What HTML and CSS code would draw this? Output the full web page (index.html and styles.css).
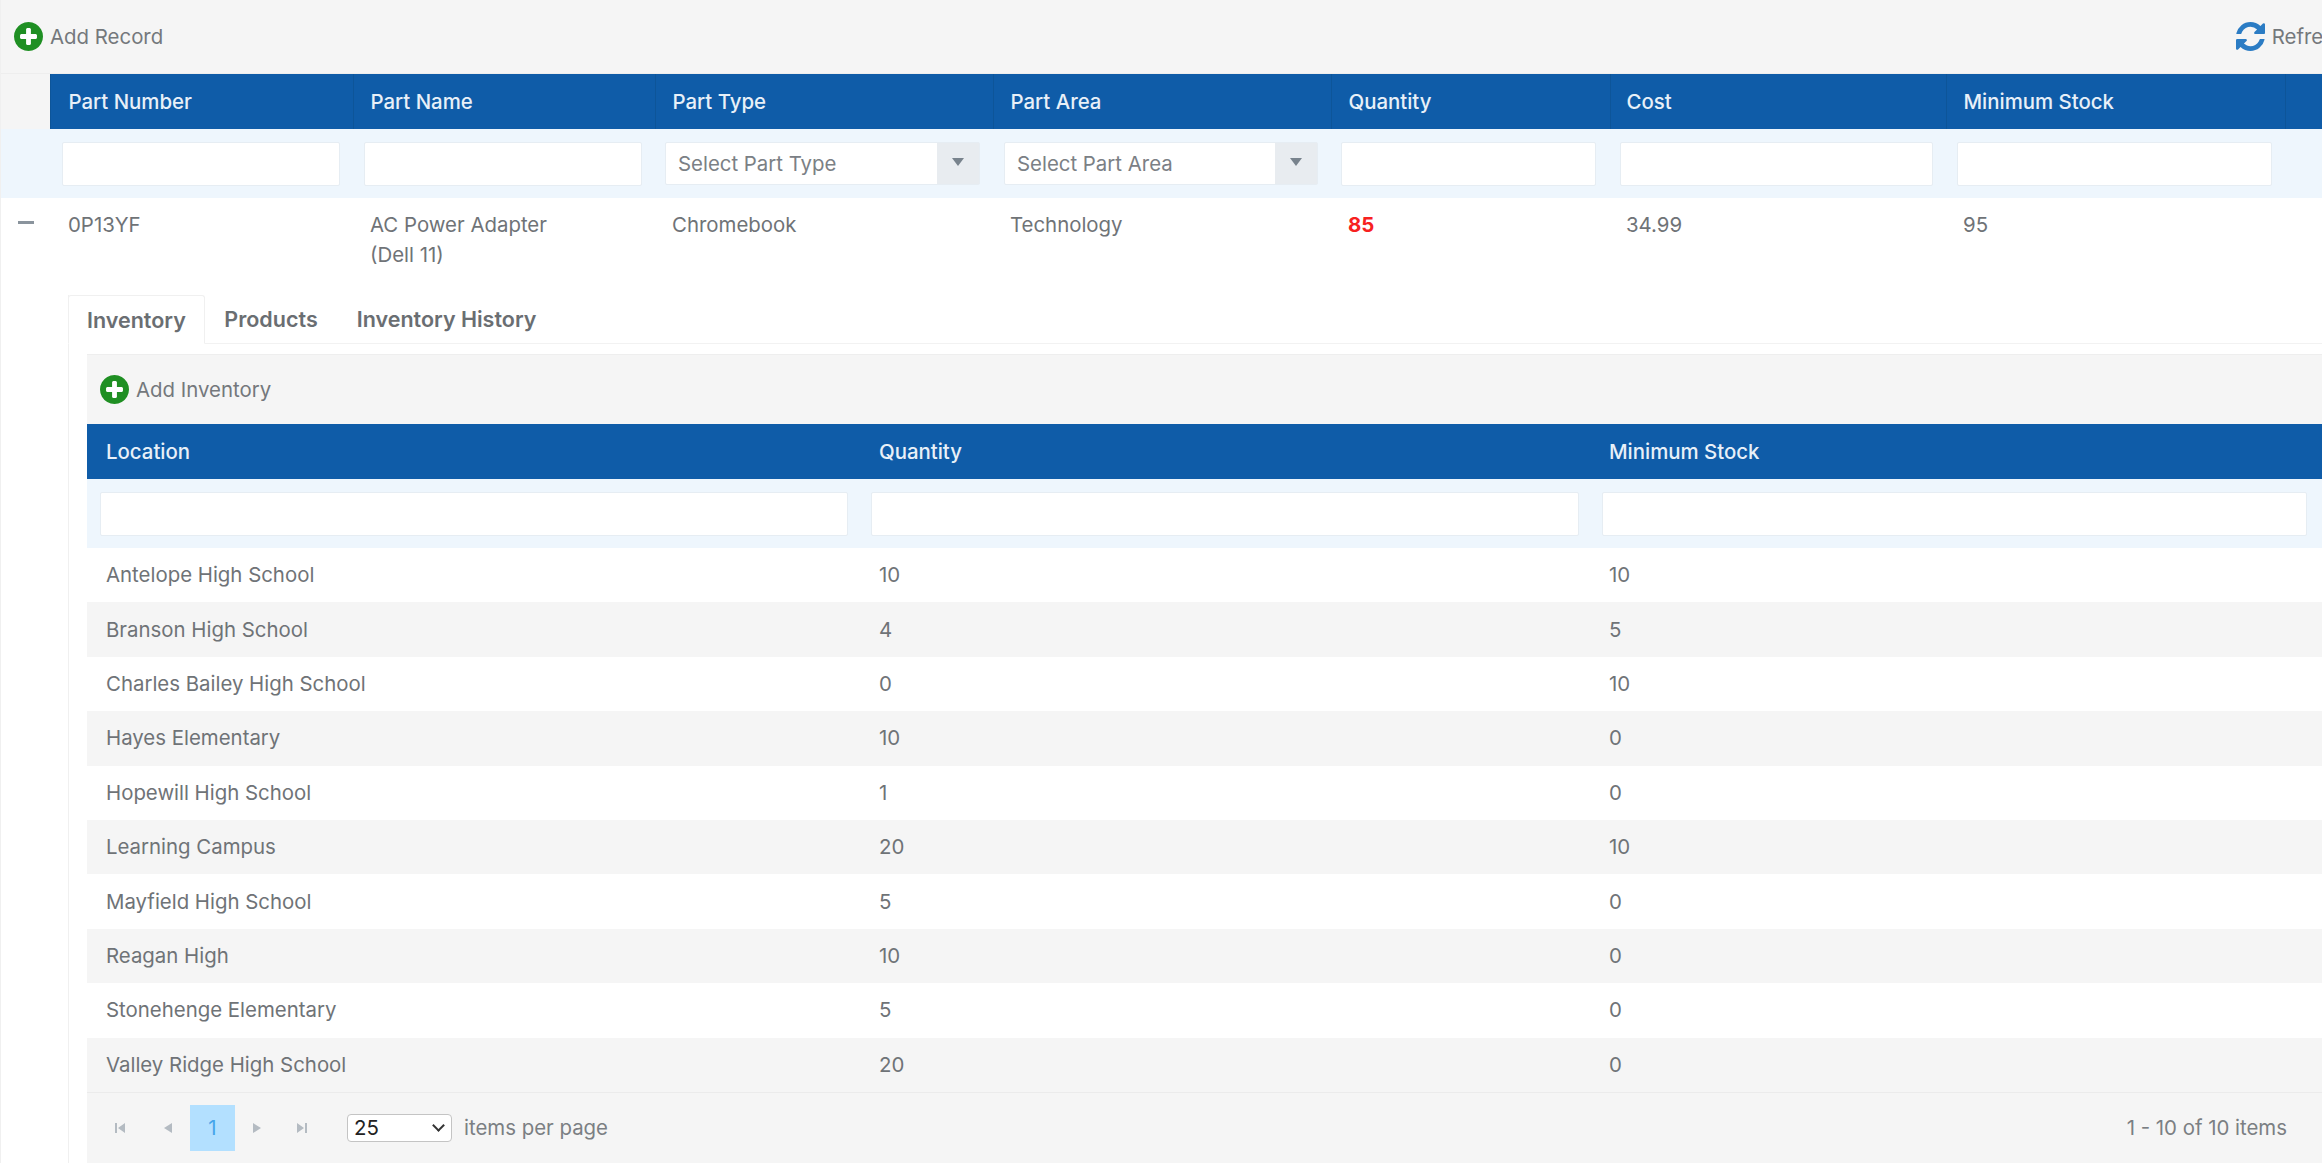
FILE: index.html
```html
<!DOCTYPE html>
<html lang="en">
<head>
  <meta charset="UTF-8" />
  <title>Parts</title>
  <link rel="stylesheet" href="styles.css">
</head>
<body>

  <!-- icon defs -->
  <svg class="defs" width="0" height="0">
    <symbol id="i-plus" viewBox="0 0 1536 1536">
      <circle cx="768" cy="768" r="600" fill="#fff" />
      <path fill="#1f8f23" d="M1216 832v-128q0-26-19-45t-45-19h-256v-256q0-26-19-45t-45-19h-128q-26 0-45 19t-19 45v256h-256q-26 0-45 19t-19 45v128q0 26 19 45t45 19h256v256q0 26 19 45t45 19h128q26 0 45-19t19-45v-256h256q26 0 45-19t19-45zm320-64q0 209-103 385.5t-279.5 279.5-385.5 103-385.5-103-279.5-279.5-103-385.5 103-385.5 279.5-279.5 385.5-103 385.5 103 279.5 279.5 103 385.5z" />
    </symbol>
  </svg>

  <div class="grid">
    <div class="toolbar">
      <a class="tool-btn"><svg class="ico"><use href="#i-plus" /></svg>Add Record</a>
      <a class="tool-btn refresh">
        <svg class="ico" viewBox="0 0 1536 1536"><path fill="#2b7cc4" d="M1511 928q0 5-1 7-64 268-268 434.5t-478 166.5q-146 0-282.5-55t-243.5-157l-129 129q-19 19-45 19t-45-19-19-45v-448q0-26 19-45t45-19h448q26 0 45 19t19 45-19 45l-137 137q71 66 161 102t187 36q134 0 250-65t186-179q11-17 53-117 8-23 30-23h192q13 0 22.5 9.5t9.5 22.5zm25-800v448q0 26-19 45t-45 19h-448q-26 0-45-19t-19-45 19-45l138-138q-148-137-349-137-134 0-250 65t-186 179q-11 17-53 117-8 23-30 23h-199q-13 0-22.5-9.5t-9.5-22.5v-7q65-268 270-434.5t480-166.5q146 0 284 55.5t245 156.5l130-129q19-19 45-19t45 19 19 45z" /></svg>
        Refresh
      </a>
    </div>

    <table class="parts">
      <colgroup>
        <col class="c-toggle"><col class="c-number"><col class="c-name"><col class="c-type"><col class="c-area"><col class="c-qty"><col class="c-cost"><col class="c-min"><col class="c-rest">
      </colgroup>
      <thead>
        <tr class="head-row">
          <th class="toggle-head"></th>
          <th class="cell-number">Part Number</th>
          <th>Part Name</th>
          <th>Part Type</th>
          <th>Part Area</th>
          <th>Quantity</th>
          <th class="cell-cost">Cost</th>
          <th>Minimum Stock</th>
          <th></th>
        </tr>
        <tr class="filter-row">
          <td></td>
          <td class="f-number"><input class="filter-input" /></td>
          <td class="f-name"><input class="filter-input" /></td>
          <td class="f-type"><span class="dropdown"><span class="dropdown-text">Select Part Type</span><span class="dropdown-arrow"></span></span></td>
          <td class="f-area"><span class="dropdown"><span class="dropdown-text">Select Part Area</span><span class="dropdown-arrow"></span></span></td>
          <td class="f-qty"><input class="filter-input" /></td>
          <td class="f-cost"><input class="filter-input" /></td>
          <td class="f-min"><input class="filter-input" /></td>
          <td></td>
        </tr>
      </thead>
      <tbody>
        <tr class="part-row">
          <td><span class="collapse-icon"></span></td>
          <td class="cell-number">0P13YF</td>
          <td>AC Power Adapter<br>(Dell 11)</td>
          <td>Chromebook</td>
          <td>Technology</td>
          <td class="low-stock">85</td>
          <td class="cell-cost">34.99</td>
          <td>95</td>
          <td></td>
        </tr>
        <tr class="detail-row">
          <td></td>
          <td colspan="8" class="detail-cell">
            <div class="detail">
              <ul class="tabs">
                <li class="tab active">Inventory</li>
                <li class="tab">Products</li>
                <li class="tab">Inventory History</li>
              </ul>

              <div class="subgrid">
                <div class="toolbar sub-toolbar">
                  <a class="tool-btn"><svg class="ico"><use href="#i-plus" /></svg>Add Inventory</a>
                </div>
                <table class="inventory">
                  <colgroup><col class="c-loc"><col class="c-iqty"><col class="c-imin"></colgroup>
                  <thead>
                    <tr class="head-row">
                      <th>Location</th>
                      <th>Quantity</th>
                      <th>Minimum Stock</th>
                    </tr>
                    <tr class="filter-row">
                      <td class="f-loc"><input class="filter-input" /></td>
                      <td class="f-iqty"><input class="filter-input" /></td>
                      <td class="f-imin"><input class="filter-input" /></td>
                    </tr>
                  </thead>
                  <tbody>
                    <tr><td>Antelope High School</td><td>10</td><td>10</td></tr>
                    <tr><td>Branson High School</td><td>4</td><td>5</td></tr>
                    <tr><td>Charles Bailey High School</td><td>0</td><td>10</td></tr>
                    <tr><td>Hayes Elementary</td><td>10</td><td>0</td></tr>
                    <tr><td>Hopewill High School</td><td>1</td><td>0</td></tr>
                    <tr><td>Learning Campus</td><td>20</td><td>10</td></tr>
                    <tr><td>Mayfield High School</td><td>5</td><td>0</td></tr>
                    <tr><td>Reagan High</td><td>10</td><td>0</td></tr>
                    <tr><td>Stonehenge Elementary</td><td>5</td><td>0</td></tr>
                    <tr><td>Valley Ridge High School</td><td>20</td><td>0</td></tr>
                  </tbody>
                </table>

                <div class="pager">
                  <svg class="pg-icon" viewBox="0 0 14 14"><path d="M2 2h2v10H2zM12 2v10L5 7z" /></svg>
                  <svg class="pg-icon" viewBox="0 0 14 14"><path d="M11 2v10L3 7z" /></svg>
                  <span class="pg-current">1</span>
                  <svg class="pg-icon pg-next" viewBox="0 0 14 14"><path d="M3 2v10l8-5z" /></svg>
                  <svg class="pg-icon" viewBox="0 0 14 14"><path d="M2 2v10l7-5zM10 2h2v10h-2z" /></svg>
                  <span class="pg-select"><select class="pg-size"><option>25</option></select></span>
                  <span class="pg-label">items per page</span>
                  <span class="pg-info">1 - 10 of 10 items</span>
                </div>
              </div>
            </div>
          </td>
        </tr>
      </tbody>
    </table>
  </div>

</body>
</html>
```

FILE: styles.css
```css
html, body {
  margin: 0;
  padding: 0;
  height: 1164px;
  overflow: hidden;
  background: #fff;
}

body {
  font-family: Inter, 'Noto Sans', sans-serif;
  font-size: 20.4px;
  color: #6f7377;
}

.defs {
  position: absolute;
}

.grid {
  width: 2359px;
  border-left: 1px solid #f0f0f0;
}

/* toolbars */
.toolbar {
  display: flex;
  align-items: center;
  justify-content: space-between;
  height: 73px;
  padding: 0 14px 0 13px;
  background: #f5f5f5;
  border-bottom: 1px solid #eeeeee;
}

.tool-btn {
  display: flex;
  align-items: center;
  gap: 7px;
  color: #74787c;
}

.ico {
  width: 29px;
  height: 29px;
  flex: none;
}

/* tables */
table {
  border-collapse: collapse;
  table-layout: fixed;
  border-spacing: 0;
}

.parts {
  width: 2349px;
}

.c-toggle { width: 49px; }
.c-number { width: 303px; }
.c-name { width: 302px; }
.c-type { width: 338px; }
.c-area { width: 338px; }
.c-qty { width: 279px; }
.c-cost { width: 336px; }
.c-min { width: 339px; }
.c-rest { width: 65px; }

.head-row th {
  height: 55px;
  padding: 0 17px;
  background: #0f5ca8;
  border-left: 1px solid #0d5599;
  color: #e8f0f8;
  font-weight: 500;
  text-align: left;
}

.head-row th.toggle-head {
  background: #f5f5f5;
  border-left: none;
}

.head-row th.cell-number,
.part-row td.cell-number {
  padding-left: 18px;
}

.head-row th.cell-cost,
.part-row td.cell-cost {
  padding-left: 16px;
}

.filter-row td {
  height: 69px;
  padding: 0;
  background: #eef6fd;
}

.filter-input {
  display: block;
  box-sizing: border-box;
  height: 44px;
  padding: 0;
  background: #fff;
  border: 1px solid #e6edf3;
  border-radius: 2px;
  outline: none;
}

.filter-row .f-number { padding-left: 12px; }
.f-number .filter-input { width: 278px; }
.filter-row .f-name { padding-left: 11px; }
.f-name .filter-input { width: 278px; }
.filter-row .f-type { padding-left: 10px; }
.f-type .dropdown { width: 315px; }
.filter-row .f-area { padding-left: 11px; }
.f-area .dropdown { width: 314px; }
.filter-row .f-qty { padding-left: 10px; }
.f-qty .filter-input { width: 255px; }
.filter-row .f-cost { padding-left: 10px; }
.f-cost .filter-input { width: 313px; }
.filter-row .f-min { padding-left: 11px; }
.f-min .filter-input { width: 315px; }

.dropdown {
  display: flex;
  box-sizing: border-box;
  height: 43px;
  background: #fff;
  border: 1px solid #e6edf3;
  border-radius: 2px;
  color: #7b8085;
}

.dropdown-text {
  flex: 1;
  padding-left: 12px;
  line-height: 41px;
  white-space: nowrap;
}

.dropdown-arrow {
  display: flex;
  align-items: center;
  justify-content: center;
  width: 42px;
  background: #e8ecf0;
}

.dropdown-arrow::after {
  content: "";
  margin-bottom: 4px;
  border-left: 6px solid transparent;
  border-right: 6px solid transparent;
  border-top: 8px solid #78838d;
}

.part-row td {
  padding: 12px 17px 12px;
  line-height: 30px;
  vertical-align: top;
}

.part-row td:first-child {
  padding: 0;
}

.collapse-icon {
  display: block;
  width: 16px;
  height: 3px;
  margin: 23px 0 0 17px;
  background: #8a949d;
}

.low-stock {
  color: #f7211f;
  font-weight: 700;
}

/* detail */
.detail-cell {
  padding: 13px 0 0 18px;
}

.detail {
  border-left: 1px solid #f0f0f0;
}

.tabs {
  display: flex;
  height: 48px;
  margin: 0;
  padding: 0;
  list-style: none;
  border-bottom: 1px solid #f2f2f2;
}

.tab {
  box-sizing: border-box;
  height: 49px;
  padding: 0 19.5px;
  line-height: 48px;
  font-size: 21.5px;
  font-weight: 600;
  color: #6a6e72;
}

.tab.active {
  margin-left: -1px;
  padding: 0 18px;
  background: #fff;
  border: 1px solid #f0f0f0;
  border-bottom-color: #fff;
  border-radius: 3px 3px 0 0;
}

.subgrid {
  margin: 10px 0 0 18px;
}

.sub-toolbar {
  height: 69px;
  padding: 0 13px;
  border-bottom: none;
  border-top: 1px solid #eeeeee;
}

.inventory {
  width: 2235px;
}

.c-loc { width: 773px; }
.c-iqty { width: 730px; }
.c-imin { width: 732px; }

.inventory .head-row th {
  padding: 0 19px;
  border-left: none;
}

.inventory tbody td {
  height: 54.4px;
  padding: 0 19px;
  line-height: 24px;
}

.inventory tbody tr:nth-child(even) td {
  background: #f5f5f5;
}

.filter-row .f-loc { padding-left: 13px; }
.f-loc .filter-input { width: 748px; }
.filter-row .f-iqty { padding-left: 11px; }
.f-iqty .filter-input { width: 708px; }
.filter-row .f-imin { padding-left: 12px; }
.f-imin .filter-input { width: 705px; }

/* pager */
.pager {
  display: flex;
  align-items: center;
  box-sizing: border-box;
  width: 2235px;
  height: 71px;
  padding: 0 35px 0 9px;
  background: #f5f5f5;
  border-top: 1px solid #ebebeb;
}

.pg-icon {
  width: 14px;
  height: 14px;
  margin: 0 17px;
  fill: #b4bbc2;
}

.pg-next {
  margin-right: 14px;
}

.pg-current {
  width: 45px;
  height: 46px;
  margin: 0 -2px;
  background: #b3e0ff;
  color: #46a5ea;
  line-height: 46px;
  text-align: center;
}

.pg-select {
  position: relative;
  display: block;
  margin-left: 21px;
}

/* chevron of the native select */
.pg-select::after {
  content: "";
  position: absolute;
  top: 7px;
  right: 9px;
  width: 7px;
  height: 7px;
  border-right: 2px solid #333;
  border-bottom: 2px solid #333;
  transform: rotate(45deg);
  pointer-events: none;
}

.pg-size {
  display: block;
  box-sizing: border-box;
  width: 105px;
  height: 28px;
  padding: 0 0 0 6px;
  background-color: #fff;
  border: 1px solid #c4c4c4;
  border-radius: 4px;
  font-family: inherit;
  font-size: 20.4px;
  color: #222;
  appearance: none;
}

.pg-label {
  margin-left: 12px;
  color: #7b7f83;
}

.pg-info {
  margin-left: auto;
  color: #7b7f83;
}
```
